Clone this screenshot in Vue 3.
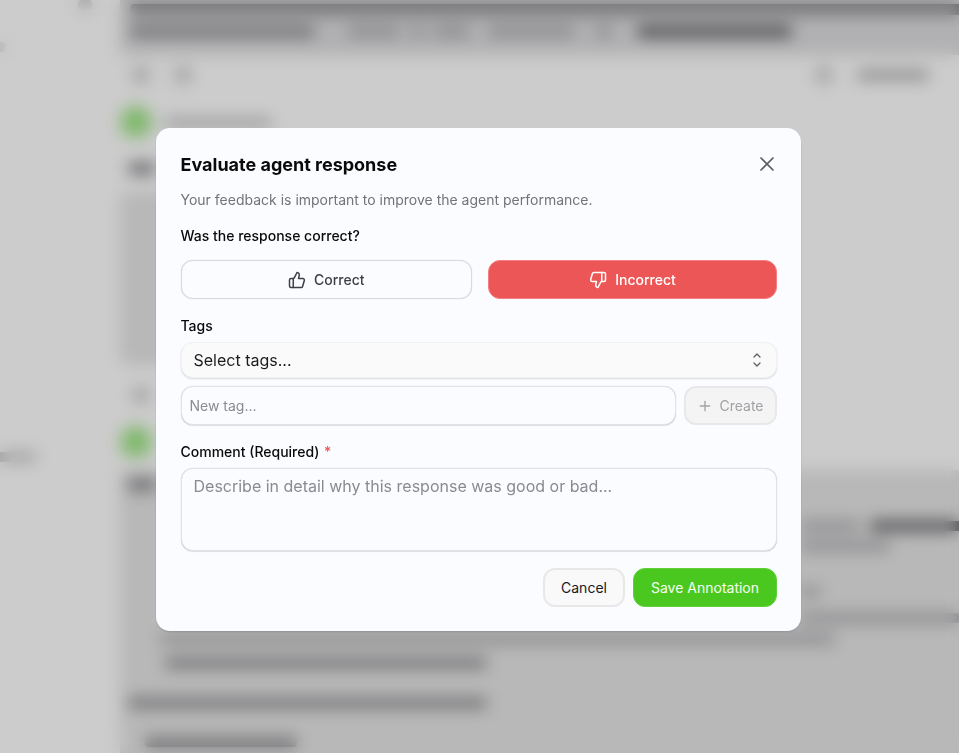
<template>
  <div class="root">
    <div class="page" aria-hidden="true">
      <aside class="side">
        <span class="bar side-top"></span>
        <span class="bar side-mid"></span>
        <span class="bar side-low"></span>
      </aside>
      <main class="main">
        <section class="quote">
          <div v-for="(line, i) in quoteLines" :key="i" class="line">
            <span v-for="(b, j) in line" :key="j" class="bar" :class="b.cls" :style="{ width: b.w + 'px', marginLeft: (b.x || 0) + 'px' }"></span>
          </div>
        </section>
        <div class="tools">
          <span class="dot"></span><span class="dot"></span>
          <span class="spacer"></span>
          <span class="dot"></span><span class="bar tool-bar"></span>
        </div>
        <div class="author"><span class="avatar"></span><span class="bar faint author-name"></span></div>
        <span class="bar head-bar"></span>
        <section class="code"></section>
        <div class="tools small"><span class="dot"></span></div>
        <div class="author second"><span class="avatar"></span></div>
        <section class="answer">
          <span class="bar head-bar first"></span>
          <div v-for="(line, i) in answerLines" :key="i" class="a-line" :style="{ marginTop: line.top + 'px' }">
            <span v-for="(b, j) in line.bars" :key="j" class="bar" :class="b.cls" :style="{ width: b.w + 'px', marginLeft: (b.x || 0) + 'px' }"></span>
          </div>
        </section>
      </main>
    </div>

    <div class="overlay">
      <div class="dialog">
        <header class="dialog-head">
          <h2>Evaluate agent response</h2>
          <button class="close" aria-label="Close">
            <svg width="24" height="24" viewBox="0 0 24 24" fill="none" stroke="currentColor" stroke-width="1.75" stroke-linecap="round" stroke-linejoin="round"><path d="M18 6 6 18" /><path d="m6 6 12 12" /></svg>
          </button>
        </header>
        <p class="sub">Your feedback is important to improve the agent performance.</p>
        <p class="label question">Was the response correct?</p>
        <div class="choice">
          <button class="btn-correct">
            <svg width="18" height="18" viewBox="0 0 24 24" fill="none" stroke="currentColor" stroke-width="2" stroke-linecap="round" stroke-linejoin="round"><path d="M7 10v12" /><path d="M15 5.88 14 10h5.83a2 2 0 0 1 1.92 2.56l-2.33 8A2 2 0 0 1 17.5 22H4a2 2 0 0 1-2-2v-8a2 2 0 0 1 2-2h2.76a2 2 0 0 0 1.79-1.11L12 2a3.13 3.13 0 0 1 3 3.88Z" /></svg>
            Correct
          </button>
          <button class="btn-incorrect">
            <svg width="18" height="18" viewBox="0 0 24 24" fill="none" stroke="currentColor" stroke-width="2" stroke-linecap="round" stroke-linejoin="round"><path d="M17 14V2" /><path d="M9 18.12 10 14H4.17a2 2 0 0 1-1.92-2.56l2.33-8A2 2 0 0 1 6.5 2H20a2 2 0 0 1 2 2v8a2 2 0 0 1-2 2h-2.76a2 2 0 0 0-1.79 1.11L12 22a3.13 3.13 0 0 1-3-3.88Z" /></svg>
            Incorrect
          </button>
        </div>
        <p class="label tags">Tags</p>
        <button class="select">
          <span>Select tags...</span>
          <svg width="18" height="18" viewBox="0 0 24 24" fill="none" stroke="currentColor" stroke-width="1.7" stroke-linecap="round" stroke-linejoin="round"><path d="m8 16 4 4 4-4" /><path d="m8 8 4-4 4 4" /></svg>
        </button>
        <div class="new-tag">
          <input type="text" placeholder="New tag..." />
          <button class="create" disabled>
            <svg width="16" height="16" viewBox="0 0 24 24" fill="none" stroke="currentColor" stroke-width="2" stroke-linecap="round" stroke-linejoin="round"><path d="M5 12h14" /><path d="M12 5v14" /></svg>
            Create
          </button>
        </div>
        <p class="label comment">Comment (Required) <span class="req">*</span></p>
        <textarea placeholder="Describe in detail why this response was good or bad..."></textarea>
        <footer class="foot">
          <button class="cancel">Cancel</button>
          <button class="save">Save Annotation</button>
        </footer>
      </div>
    </div>
  </div>
</template>

<script setup>
const quoteLines = [
  [{ w: 840 }],
  [
    { w: 185 },
    { w: 53, x: 32, cls: "faint" },
    { w: 15, x: 10, cls: "faint" },
    { w: 37, x: 8, cls: "faint" },
    { w: 87, x: 18, cls: "faint" },
    { w: 17, x: 20, cls: "faint" },
    { w: 155, x: 25, cls: "dark" },
  ],
];

const answerLines = [
  { top: 30, bars: [{ w: 60, x: 680, cls: "faint" }, { w: 100, x: 10, cls: "dark" }] },
  { top: 10, bars: [{ w: 90, x: 680, cls: "faint" }] },
  { top: 36, bars: [{ w: 20, x: 680, cls: "faint" }] },
  { top: 16, bars: [{ w: 160, x: 680, cls: "faint" }] },
  { top: 11, bars: [{ w: 675, x: 40, cls: "faint" }] },
  { top: 14, bars: [{ w: 322, x: 45 }] },
  { top: 30, bars: [{ w: 359, x: 8 }] },
  { top: 29, bars: [{ w: 152, x: 25 }] },
];
</script>

<style>
html,
body {
  margin: 0;
  background: #fff;
}
</style>

<style scoped>
.root {
  position: relative;
  height: 100vh;
  overflow: hidden;
  background: #fff;
  font-family: Inter, "Noto Sans", sans-serif;
  color: #0a0a0a;
}
.page {
  display: flex;
  height: 100%;
}
.side {
  width: 116px;
  flex-shrink: 0;
  position: relative;
}
.bar {
  display: block;
  height: 10px;
  border-radius: 4px;
  background: #8c8c90;
  flex-shrink: 0;
}
.bar.faint {
  background: #aeaeb2;
}
.bar.dark {
  background: #5f5f64;
}
.side-top {
  position: absolute;
  left: 78px;
  top: 0;
  width: 14px;
  background: #d4d4d4;
}
.side-mid {
  position: absolute;
  left: -10px;
  top: 42px;
  width: 16px;
  background: #e0e0e0;
}
.side-low {
  position: absolute;
  left: -10px;
  top: 452px;
  width: 46px;
  background: #c8c8c8;
}
.main {
  flex: 1;
  min-width: 0;
  padding-left: 4px;
}
.quote {
  height: 55px;
  background: #dedee0;
  box-sizing: border-box;
  padding: 4px 0 0 10px;
  overflow: hidden;
}
.line {
  display: flex;
  margin-bottom: 11px;
}
.line .bar {
  height: 11px;
}
.tools {
  display: flex;
  align-items: center;
  gap: 24px;
  height: 40px;
  padding: 0 30px 0 12px;
}
.dot {
  width: 18px;
  height: 18px;
  border-radius: 50%;
  background: #cdcdcf;
}
.spacer {
  flex: 1;
}
.tool-bar {
  width: 72px;
  background: #b0b0b3;
}
.tools.small {
  height: 30px;
  margin-top: 15px;
}
.author {
  display: flex;
  align-items: center;
  gap: 12px;
  height: 30px;
  margin-top: 12px;
}
.author.second {
  margin-top: 17px;
}
.avatar {
  width: 32px;
  height: 32px;
  border-radius: 50%;
  background: #a2e78a;
  flex-shrink: 0;
}
.author-name {
  width: 108px;
  height: 7px;
}
.head-bar {
  width: 28px;
  height: 13px;
  margin: 25px 0 0 8px;
}
.head-bar.first {
  margin-top: 8px;
}
.code {
  height: 173px;
  margin-top: 17px;
  width: 600px;
  background: #e6e6e6;
  border-radius: 8px;
}
.answer {
  height: 300px;
  margin-top: 13px;
  background: #e6e6e6;
  overflow: hidden;
}
.a-line {
  display: flex;
}
.overlay {
  position: absolute;
  inset: 0;
  background: rgba(0, 0, 0, 0.2);
  backdrop-filter: blur(8px);
  padding: 128px 0 0 156px;
  box-sizing: border-box;
}
.dialog {
  width: 645px;
  box-sizing: border-box;
  padding: 24px 24px 24px 24.5px;
  background: #fbfcff;
  border-radius: 14px;
  box-shadow: 0 1px 2px rgba(0, 0, 0, 0.15);
}
.dialog-head {
  display: flex;
  align-items: center;
  justify-content: space-between;
  height: 26px;
}
h2 {
  margin: 0;
  font-size: 18px;
  font-weight: 700;
  line-height: 26px;
}
button {
  font-family: inherit;
  cursor: pointer;
}
.close {
  border: 0;
  background: none;
  padding: 0;
  margin-right: -2px;
  margin-top: -2px;
  color: #5e5e62;
  display: flex;
}
p {
  margin: 0;
}
.sub {
  margin-top: 12px;
  font-size: 14px;
  line-height: 20px;
  color: #737378;
}
.label {
  font-size: 14px;
  font-weight: 500;
  line-height: 20px;
}
.question {
  margin-top: 16px;
}
.choice {
  display: flex;
  gap: 16px;
  margin-top: 14px;
}
.choice button {
  height: 39px;
  border-radius: 12px;
  display: flex;
  align-items: center;
  justify-content: center;
  gap: 8px;
  font-size: 14px;
  font-weight: 500;
}
.btn-correct {
  width: 291.5px;
  background: #fbfcff;
  border: 1px solid #dadadd;
  box-shadow: 0 0 1px rgba(0, 0, 0, 0.2);
  color: #3f3f46;
}
.btn-incorrect {
  width: 289px;
  background: #ec5656;
  border: 1px solid #f17f7f;
  color: #fff;
}
.tags {
  margin-top: 17px;
}
.select {
  display: flex;
  align-items: center;
  justify-content: space-between;
  width: 100%;
  height: 36px;
  margin-top: 6px;
  padding: 0 10px 0 12px;
  background: #fbfafa;
  border: 1px solid #f1f1f2;
  border-radius: 12px;
  box-shadow: 0 1px 2px rgba(0, 0, 0, 0.14);
  font-size: 16px;
  color: #1c1c1e;
}
.select svg {
  color: #5e5e62;
}
.new-tag {
  display: flex;
  gap: 8px;
  margin-top: 8px;
}
input,
textarea {
  box-sizing: border-box;
  background: #fbfcff;
  border: 1px solid #e2e2e5;
  border-radius: 12px;
  outline: none;
  font-family: inherit;
  color: #111;
  box-shadow: 0 0 1px rgba(0, 0, 0, 0.18), 0 1px 1px rgba(0, 0, 0, 0.1);
}
input {
  flex: 1;
  min-width: 0;
  height: 39px;
  padding: 0 8px;
  font-size: 14px;
}
input::placeholder {
  color: #8a8a90;
}
textarea::placeholder {
  color: #8a8a90;
}
.create {
  width: 93px;
  height: 39px;
  display: flex;
  align-items: center;
  justify-content: center;
  gap: 6px;
  padding: 0;
  background: #f4f4f5;
  border: 2px solid #e8e8e9;
  border-radius: 12px;
  font-size: 14px;
  color: #a2a2a6;
}
.comment {
  margin-top: 17px;
}
.req {
  color: #ee5757;
  margin-left: 1px;
}
textarea {
  display: block;
  width: 100%;
  height: 83px;
  margin-top: 6px;
  padding: 5px 12px;
  font-size: 16px;
  line-height: 24px;
  resize: none;
}
.foot {
  display: flex;
  justify-content: flex-end;
  gap: 8px;
  margin-top: 17px;
}
.foot button {
  height: 39px;
  border-radius: 12px;
  font-size: 14px;
  font-weight: 400;
}
.cancel {
  width: 82px;
  background: #f9f9f9;
  border: 2px solid #e8e8e9;
  color: #18181b;
}
.save {
  width: 144px;
  background: #4bc820;
  border: 1px solid #5fd037;
  color: #f6fff2;
}
</style>
